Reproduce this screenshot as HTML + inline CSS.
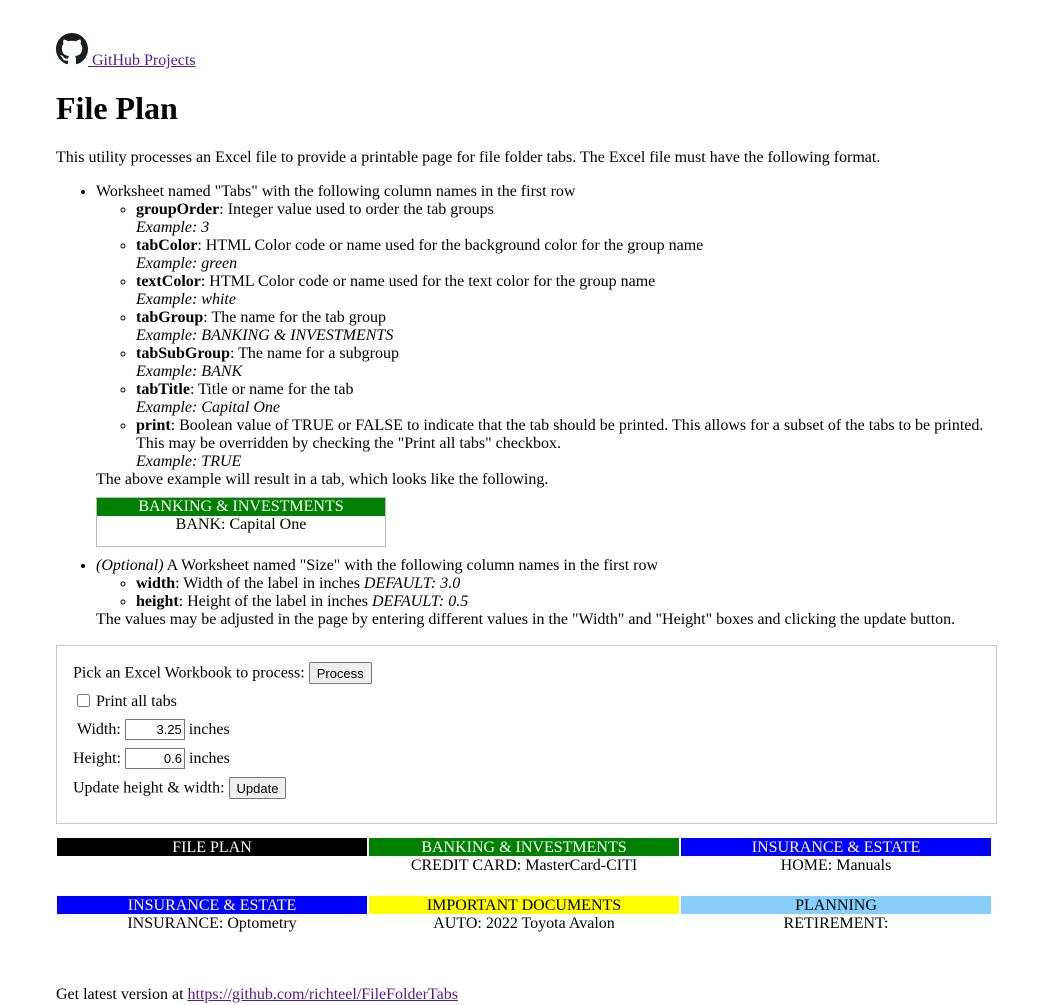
<!DOCTYPE html>
<html><head><meta charset="utf-8">
<style>
body{margin:0;padding:0 56px;font-family:"Liberation Serif",serif;font-size:16px;line-height:18px;color:#000;background:#fff;width:941px}
a{color:#551a8b}
.gh{position:absolute;top:33px;left:56px}
h1{position:absolute;top:92px;left:56px;margin:0;font-size:32px;line-height:32px}
.intro{position:absolute;top:149px;left:56px;margin:0}
ul.main{position:absolute;top:183px;left:56px;margin:0;padding-left:40px;width:901px}
ul.sub{margin:0;padding-left:40px;list-style:circle}
.ex{width:288px;height:48px;border:1px solid #bbb;margin:8px 0 10px;text-align:center}
.ex .h{background:#008000;color:#fff}
.form{position:absolute;top:645px;left:56px;width:939px;height:177px;border:1px solid #c8c8c8}
.form div{position:absolute;left:16px;white-space:nowrap}
button{font-family:"Liberation Sans",sans-serif;font-size:13px;padding:1px 7px;border:1px solid #767676;border-radius:2px;background:#efefef;height:22px}
input[type=text]{font-family:"Liberation Sans",sans-serif;font-size:13px;width:54px;height:17px;text-align:right;border:1px solid #767676;padding:1px 2px}
.tabs{position:absolute;left:57px;width:934px;display:grid;grid-template-columns:310px 310px 310px;column-gap:2px;text-align:center;line-height:19px}
.tabs .h{height:18px;line-height:19px}
.foot{position:absolute;top:986px;left:56px}
</style></head><body>
<div class="gh"><svg width="32" height="32" viewBox="0 0 16 16" style="vertical-align:baseline"><path fill="#1b1f23" d="M8 0C3.580 0 0 3.58 0 8c0 3.54 2.29 6.53 5.47 7.590.4.07.55-.17.55-.38 0-.19-.01-.82-.01-1.49-2.01.37-2.53-.49-2.690-.94-.09-.23-.48-.94-.82-1.13-.28-.15-.68-.52-.01-.53.63-.01 1.08.58 1.23.82.72 1.21 1.87.87 2.33.66.07-.52.28-.87.51-1.07-1.78-.2-3.64-.89-3.64-3.95 0-.87.31-1.59.82-2.15-.08-.2-.36-1.02.08-2.12 0 0 .67-.21 2.2.82.64-.18 1.32-.27 2-.27.68 0 1.36.09 2 .27 1.53-1.04 2.2-.82 2.2-.82.44 1.1.16 1.92.08 2.12.51.56.82 1.27.82 2.15 0 3.070-1.87 3.750-3.65 3.95.29.25.54.73.54 1.48 0 1.070-.01 1.930-.01 2.2 0 .21.15.46.55.38A8.013 8.013 0 0016 8c0-4.42-3.58-8-8-8z"/></svg><a href="#"> GitHub Projects</a></div>
<h1>File Plan</h1>
<p class="intro">This utility processes an Excel file to provide a printable page for file folder tabs. The Excel file must have the following format.</p>
<ul class="main">
<li>Worksheet named "Tabs" with the following column names in the first row
<ul class="sub">
<li><b>groupOrder</b>: Integer value used to order the tab groups<br><i>Example: 3</i></li>
<li><b>tabColor</b>: HTML Color code or name used for the background color for the group name<br><i>Example: green</i></li>
<li><b>textColor</b>: HTML Color code or name used for the text color for the group name<br><i>Example: white</i></li>
<li><b>tabGroup</b>: The name for the tab group<br><i>Example: BANKING &amp; INVESTMENTS</i></li>
<li><b>tabSubGroup</b>: The name for a subgroup<br><i>Example: BANK</i></li>
<li><b>tabTitle</b>: Title or name for the tab<br><i>Example: Capital One</i></li>
<li><b>print</b>: Boolean value of TRUE or FALSE to indicate that the tab should be printed. This allows for a subset of the tabs to be printed. This may be overridden by checking the "Print all tabs" checkbox.<br><i>Example: TRUE</i></li>
</ul>
The above example will result in a tab, which looks like the following.
<div class="ex"><div class="h">BANKING &amp; INVESTMENTS</div><div>BANK: Capital One</div></div>
</li>
<li><i>(Optional)</i> A Worksheet named "Size" with the following column names in the first row
<ul class="sub">
<li><b>width</b>: Width of the label in inches <i>DEFAULT: 3.0</i></li>
<li><b>height</b>: Height of the label in inches <i>DEFAULT: 0.5</i></li>
</ul>
The values may be adjusted in the page by entering different values in the "Width" and "Height" boxes and clicking the update button.</li>
</ul>
<div class="form">
<div style="top:16px">Pick an Excel Workbook to process: <button>Process</button></div>
<div style="top:47px"><input type="checkbox" style="margin:0 6px 0 4px;vertical-align:-1px">Print all tabs</div>
<div style="top:73px">&nbsp;Width: <input type="text" value="3.25"> inches</div>
<div style="top:102px">Height: <input type="text" value="0.6"> inches</div>
<div style="top:131px">Update height &amp; width: <button>Update</button></div>
</div>
<div class="tabs" style="top:838px">
<div class="h" style="background:#000;color:#fff">FILE PLAN</div>
<div class="h" style="background:#008000;color:#fff">BANKING &amp; INVESTMENTS</div>
<div class="h" style="background:#0000ff;color:#fff">INSURANCE &amp; ESTATE</div>
<div></div><div>CREDIT CARD: MasterCard-CITI</div><div>HOME: Manuals</div>
</div>
<div class="tabs" style="top:896px">
<div class="h" style="background:#0000ff;color:#fff">INSURANCE &amp; ESTATE</div>
<div class="h" style="background:#ffff00;color:#000">IMPORTANT DOCUMENTS</div>
<div class="h" style="background:#87cefa;color:#000">PLANNING</div>
<div>INSURANCE: Optometry</div><div>AUTO: 2022 Toyota Avalon</div><div>RETIREMENT:</div>
</div>
<div class="foot">Get latest version at <a href="#">https://github.com/richteel/FileFolderTabs</a></div>
</body></html>
